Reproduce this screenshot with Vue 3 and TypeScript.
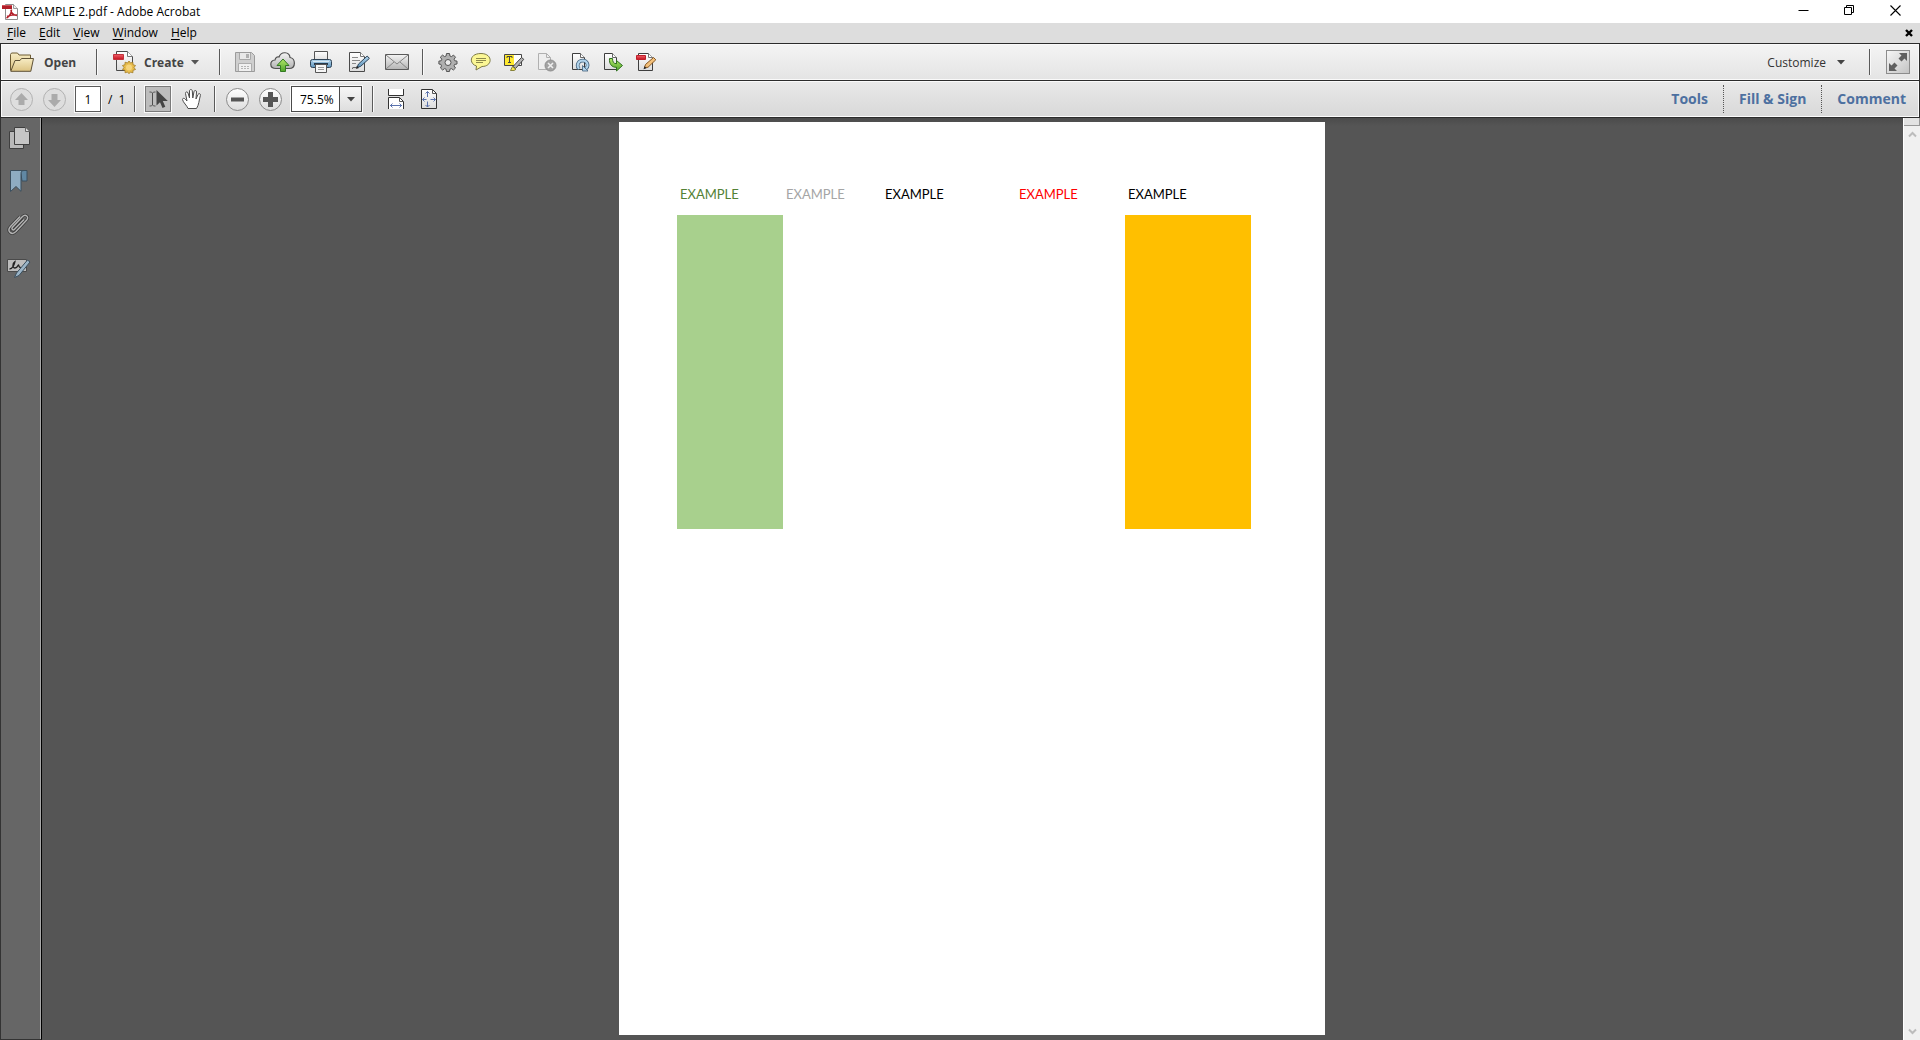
<script setup lang="ts">
import { ref } from 'vue'

const pageNumber = ref('1')
const zoomLevel = ref('75.5%')
const zoomLevels: string[] = ['50%', '75.5%', '100%', '125%', '200%']

const menus: { key: string; rest: string }[] = [
  { key: 'F', rest: 'ile' },
  { key: 'E', rest: 'dit' },
  { key: 'V', rest: 'iew' },
  { key: 'W', rest: 'indow' },
  { key: 'H', rest: 'elp' },
]

const panes: string[] = ['Tools', 'Fill & Sign', 'Comment']

const columns: { tone: string; text: string }[] = [
  { tone: 'green', text: 'EXAMPLE' },
  { tone: 'gray', text: 'EXAMPLE' },
  { tone: 'black', text: 'EXAMPLE' },
  { tone: 'red', text: 'EXAMPLE' },
  { tone: 'gold', text: 'EXAMPLE' },
]
</script>

<template>
  <div class="app">
    <svg class="defs" width="0" height="0" aria-hidden="true">
      <defs>
        <linearGradient id="paper" x1="0" y1="0" x2="0" y2="1">
          <stop offset="0" stop-color="#fff" />
          <stop offset="1" stop-color="#dcdcdc" />
        </linearGradient>
        <linearGradient id="metal" x1="0" y1="0" x2="0" y2="1">
          <stop offset="0" stop-color="#f4f4f4" />
          <stop offset="1" stop-color="#b4b4b4" />
        </linearGradient>
        <linearGradient id="folder" x1="0" y1="0" x2="0" y2="1">
          <stop offset="0" stop-color="#f7ecc4" />
          <stop offset="1" stop-color="#dcc382" />
        </linearGradient>
        <linearGradient id="redbar" x1="0" y1="0" x2="0" y2="1">
          <stop offset="0" stop-color="#f0606a" />
          <stop offset="1" stop-color="#c4121e" />
        </linearGradient>
        <linearGradient id="green" x1="0" y1="0" x2="0" y2="1">
          <stop offset="0" stop-color="#b4e86a" />
          <stop offset="1" stop-color="#4fa52a" />
        </linearGradient>
        <linearGradient id="blue" x1="0" y1="0" x2="0" y2="1">
          <stop offset="0" stop-color="#b5d6ec" />
          <stop offset="1" stop-color="#5c92bb" />
        </linearGradient>
      </defs>
    </svg>

    <header class="titlebar">
      <svg class="logo" width="16" height="16" viewBox="0 0 16 16" aria-hidden="true">
        <path d="M3.500.5h8l4 4v11h-12z" fill="#fff" stroke="#8d8d8d" />
        <path d="M11.500.5v4h4" fill="#eee" stroke="#9a9a9a" />
        <path d="M0 1h10v4H0z" fill="#b01e28" />
        <path d="M0 1h10v1H0z" fill="#d0535b" />
        <path d="M4.500 14.200c3-2 5-5 5-8.700M9 6c0 3 3 5 6 5.500M5 12.500c3-1.500 6-2.300 10-1.500" fill="none" stroke="#b3202a" stroke-width="1.500" />
      </svg>
      <h1 class="title">EXAMPLE 2.pdf - Adobe Acrobat</h1>
      <div class="caption">
        <button type="button" aria-label="Minimize">
          <svg width="11" height="11" viewBox="0 0 11 11"><path d="M.5 5.500h10" stroke="#000" /></svg>
        </button>
        <button type="button" aria-label="Restore">
          <svg width="11" height="11" viewBox="0 0 11 11"><path d="M.5 2.500h7v7h-7zM2.500 2.500v-2h7v7h-2" fill="none" stroke="#000" /></svg>
        </button>
        <button type="button" aria-label="Close">
          <svg width="11" height="11" viewBox="0 0 11 11"><path d="M.5.5l10 10M10.500.5l-10 10" stroke="#000" stroke-width="1.100" /></svg>
        </button>
      </div>
    </header>

    <nav class="menubar">
      <button v-for="menu in menus" :key="menu.key" type="button"><u>{{ menu.key }}</u>{{ menu.rest }}</button>
      <button class="closedoc" type="button" aria-label="Close document">
        <svg width="8" height="8" viewBox="0 0 8 8"><path d="M1 1l6 6M7 1l-6 6" stroke="#000" stroke-width="2.400" /></svg>
      </button>
    </nav>

    <div class="toolbar files">
      <button class="open" type="button">
        <svg width="26" height="22" viewBox="0 0 26 22">
          <path d="M1.500 19.500v-16l1-1.500h6l1.500 2h11.500v4" fill="url(#folder)" stroke="#6e5c33" />
          <path d="M1.800 20.300L6 9.500h5l1.500-2h12l-2.700 12.800z" fill="url(#folder)" stroke="#5e5136" stroke-linejoin="round" />
        </svg>
        <span>Open</span>
      </button>
      <i class="sep"></i>
      <button class="create" type="button">
        <svg width="24" height="24" viewBox="0 0 24 24">
          <path d="M3.500 1.500h11l5 5v14h-16z" fill="url(#paper)" stroke="#4a4a4a" />
          <path d="M14.500 1.500v5h5" fill="#fff" stroke="#777" />
          <path d="M.5 4.500h10v5H.5z" fill="url(#redbar)" stroke="#c2333c" />
          <path d="M16 11l1.500 2 2.400-.8.100 2.500 2.500.8-1.500 2 1.500 2-2.500.8-.1 2.500-2.400-.8-1.500 1.700-1.500-1.700-2.400.8-.1-2.500-2.500-.8 1.500-2-1.500-2 2.500-.8.100-2.500 2.400.8z" fill="#e8bd4d" stroke="#a17a22" stroke-width=".8" />
          <circle cx="16" cy="17.500" r="3" fill="#f5d47c" />
        </svg>
        <span>Create</span>
        <svg class="caret" width="8" height="5" viewBox="0 0 8 5"><path d="M0 0h8L4 4.500z" fill="#555" /></svg>
      </button>
      <i class="sep"></i>
      <div class="group wide">
        <button type="button" aria-label="Save" disabled>
          <svg width="22" height="22" viewBox="0 0 22 22">
            <path d="M1.500 1.500h16l3 3v16h-19z" fill="#cfcfcf" stroke="#9b9b9b" />
            <path d="M5.500 2v6.500h11V2" fill="#e9e9e9" stroke="#a8a8a8" />
            <path d="M12 3h3v4h-3z" fill="#b0b0b0" />
            <path d="M4.500 20v-7.500h13V20" fill="#f0f0f0" stroke="#adadad" />
            <path d="M7 15.500h8M7 17.500h8" stroke="#b5b5b5" stroke-dasharray="2 1" />
          </svg>
        </button>
        <button type="button" aria-label="Upload to cloud">
          <svg width="26" height="22" viewBox="0 0 26 22">
            <path d="M6 17.500c-7 0-6.500-8-1-8.500C5.500 6 7.500 5.500 9 6c2-6 10.500-5.500 11 .5 5.500.5 6.500 11-1 11z" fill="url(#metal)" stroke="#4f4f4f" stroke-width="1.200" />
            <path d="M13 8l6 6.500h-3.500v6h-5v-6H7z" fill="url(#green)" stroke="#337b22" stroke-linejoin="round" />
          </svg>
        </button>
        <button type="button" aria-label="Print">
          <svg width="24" height="24" viewBox="0 0 24 24">
            <path d="M5.500 1.500h13v9h-13z" fill="url(#paper)" stroke="#555" />
            <rect x="1.500" y="9.500" width="21" height="8" rx="2" fill="url(#blue)" stroke="#2f4355" />
            <path d="M4 11.500h16" stroke="#d8e8f3" />
            <path d="M5 14h14" stroke="#26384a" stroke-width="2" />
            <path d="M6.500 14.500h11v8h-11z" fill="#f6f6f6" stroke="#555" />
            <path d="M9 17.500h6M9 19.500h6" stroke="#999" />
          </svg>
        </button>
        <button type="button" aria-label="Edit">
          <svg width="22" height="22" viewBox="0 0 22 22">
            <path d="M1.500 1.500h11l4 4v15h-15z" fill="url(#paper)" stroke="#4a4a4a" />
            <path d="M12.500 1.500v4h4" fill="#fff" stroke="#777" />
            <path d="M4 6.500h6M4 9.500h8M4 12.500h4" stroke="#8a8a8a" />
            <path d="M4 17.500c2-2 3 0 5-1.500" stroke="#333" fill="none" />
            <path d="M9 16.500l1.500-3.500 8.700-8 2.200 2.400-8.800 8z" fill="url(#blue)" stroke="#2e4458" stroke-linejoin="round" />
            <path d="M8 18l3-1-2-2z" fill="#222" />
          </svg>
        </button>
        <button type="button" aria-label="Email">
          <svg width="26" height="20" viewBox="0 0 26 20">
            <path d="M1.500 2.500h23v15h-23z" fill="url(#metal)" stroke="#5a5a5a" />
            <path d="M2 3l11 9 11-9M2 17l8-7M24 17l-8-7" fill="none" stroke="#858585" />
          </svg>
        </button>
      </div>
      <i class="sep"></i>
      <div class="group">
        <button type="button" aria-label="Settings">
          <svg width="20" height="20" viewBox="0 0 20 20">
            <path d="M8.500 1.500h3l.4 2.500 1.500.6 2.100-1.500 2 2.100-1.400 2 .7 1.600 2.200.3v2.900l-2.400.4-.6 1.500 1.500 2.100-2.100 2-2-1.400-1.500.6-.4 2.300h-3l-.4-2.300-1.500-.6-2 1.400-2.100-2L3.500 13.900l-.6-1.500L.9 12V9.100l2.200-.3.7-1.600-1.500-2L4.500 3.100l2.100 1.500L8.100 4z" fill="#b0b0b0" stroke="#555" />
            <circle cx="10" cy="10.500" r="3" fill="#ececec" stroke="#555" />
          </svg>
        </button>
        <button type="button" aria-label="Add note">
          <svg width="22" height="20" viewBox="0 0 22 20">
            <path d="M11 1.500c12 0 12 13 1 13L6 18l.5-4C-1 12-1 1.500 11 1.500z" fill="#fbf795" stroke="#7d7a45" />
            <path d="M6 6.500h10M6 8.500h10M6 10.500h7" stroke="#8d8a4c" />
          </svg>
        </button>
        <button type="button" aria-label="Highlight text">
          <svg width="22" height="20" viewBox="0 0 22 20">
            <path d="M1.500 2.500h17v11h-17z" fill="#fff" stroke="#444" />
            <path d="M2 3h9v10H2z" fill="#ffe92e" />
            <path d="M4 6V4.500h5V6M6.500 4.500v6M5 10.500h3" fill="none" stroke="#444" />
            <path d="M10 14.500l8.500-9 2.300 1.800-8.300 9.200z" fill="#b4b4b4" stroke="#444" stroke-linejoin="round" />
            <path d="M7.500 18.500l2-4 3.500 2.800-2 1.200z" fill="#f5e750" stroke="#6d6820" stroke-width=".8" />
          </svg>
        </button>
        <button type="button" aria-label="Delete pages" disabled>
          <svg width="20" height="20" viewBox="0 0 20 20">
            <path d="M1.500 1.500h8l4 4v12h-12z" fill="#eee" stroke="#b0b0b0" />
            <path d="M9.500 1.500v4h4" fill="none" stroke="#b0b0b0" />
            <circle cx="13.500" cy="13.500" r="5.500" fill="#a2a2a2" stroke="#8f8f8f" />
            <path d="M11 11l5 5M16 11l-5 5" stroke="#eee" stroke-width="1.600" />
          </svg>
        </button>
        <button type="button" aria-label="Rotate pages">
          <svg width="20" height="20" viewBox="0 0 20 20">
            <path d="M2.500 1.500h8l4 4v12h-12z" fill="url(#paper)" stroke="#3e3e3e" />
            <path d="M10.500 1.500v4h4" fill="#fff" stroke="#666" />
            <path d="M9 17c-3-4-.5-8.500 4-8.500 4.500.2 6 5.500 3 8" fill="none" stroke="#41617c" stroke-width="3.600" />
            <path d="M9 17c-3-4-.5-8.500 4-8.500 4.500.2 6 5.500 3 8" fill="none" stroke="#b3d5ec" stroke-width="2" />
            <path d="M12.500 13.500v5.500h5.500z" fill="#b3d5ec" stroke="#41617c" stroke-width=".8" />
          </svg>
        </button>
        <button type="button" aria-label="Extract pages">
          <svg width="20" height="20" viewBox="0 0 20 20">
            <path d="M1.500 1.500h8l4 4v12h-12z" fill="url(#paper)" stroke="#3e3e3e" />
            <path d="M9.500 1.500v4h4" fill="#fff" stroke="#666" />
            <path d="M6.500 6.500c-.5 5 2 9 7 8.800v3.700l6-5.500-6-5v3.200c-3 0-4-2-4-5.200z" fill="url(#green)" stroke="#2f7020" stroke-linejoin="round" />
          </svg>
        </button>
        <button type="button" aria-label="Edit PDF">
          <svg width="22" height="20" viewBox="0 0 22 20">
            <path d="M3.500 1.500h10l4 4v13h-14z" fill="url(#paper)" stroke="#3e3e3e" />
            <path d="M13.500 1.500v4h4" fill="#fff" stroke="#777" />
            <path d="M1.500 3.500h9v4h-9z" fill="url(#redbar)" stroke="#bf1f2a" />
            <path d="M9.500 15.500l1-3 8-7 2.300 2.300-7.800 7.500z" fill="#f3c07a" stroke="#85551f" stroke-linejoin="round" />
            <path d="M8.500 17.300l1-3 2 2z" fill="#222" />
          </svg>
        </button>
      </div>
      <button class="customize" type="button">
        <span>Customize</span>
        <svg width="8" height="5" viewBox="0 0 8 5"><path d="M0 0h8L4 4.500z" fill="#444" /></svg>
      </button>
      <i class="sep"></i>
      <button class="fullscreen" type="button" aria-label="Read mode">
        <svg width="20" height="20" viewBox="0 0 20 20">
          <path d="M11 1h8v8l-2.500-2.500-3 3-3-3 3-3zM9 19H1v-8l2.500 2.500 3-3 3 3-3 3z" fill="#606060" />
        </svg>
      </button>
    </div>

    <div class="toolbar view">
      <div class="group first">
        <button type="button" aria-label="Previous page" disabled>
          <svg width="25" height="25" viewBox="0 0 25 25">
            <circle cx="12.500" cy="12.500" r="11" fill="#dedede" stroke="#b2b2b2" />
            <path d="M12.500 6l6.500 7h-3.500v5h-6v-5H6z" fill="#ababab" />
          </svg>
        </button>
        <button type="button" aria-label="Next page" disabled>
          <svg width="25" height="25" viewBox="0 0 25 25">
            <circle cx="12.500" cy="12.500" r="11" fill="#dedede" stroke="#b2b2b2" />
            <path d="M12.500 20L6 13h3.500V7h6v6H19z" fill="#ababab" />
          </svg>
        </button>
      </div>
      <input v-model="pageNumber" class="page-input" type="text" aria-label="Page number" />
      <span class="count"><span>/</span><span>1</span></span>
      <i class="sep"></i>
      <div class="group">
        <button class="pressed" type="button" aria-label="Select">
          <svg width="22" height="22" viewBox="0 0 22 22">
            <path d="M2.500 4c2 0 2.500.5 3 1 .5-.5 1-1 3-1M5.500 5v12M2.500 18c2 0 2.500-.5 3-1 .5.500 1 1 3 1" fill="none" stroke="#4d4d4d" />
            <path d="M9.500 2v15.500l3.500-3.300 2.500 5.800 2.800-1.300-2.500-5.700h5z" fill="#454545" />
          </svg>
        </button>
        <button type="button" aria-label="Hand">
          <svg width="22" height="22" viewBox="0 0 22 22">
            <path d="M7 20.500c-1-3-5-6-5.500-9 0-1.500 2-1.500 2.700-.3L6 13 4.500 5.500c-.3-1.800 2-2.200 2.500-.5l1.500 5V3c0-2 2.700-2 2.800 0l.5 7L13 3.700c.3-1.800 2.700-1.500 2.500.3L15 11l2-4.500c.8-1.600 3-.8 2.400.9C18 12 18 17 15.500 20.500z" fill="#fff" stroke="#4d4d4d" stroke-linejoin="round" />
          </svg>
        </button>
      </div>
      <i class="sep"></i>
      <div class="group tight">
        <button type="button" aria-label="Zoom out">
          <svg width="25" height="25" viewBox="0 0 25 25">
            <circle cx="12.500" cy="12.500" r="11" fill="url(#paper)" stroke="#8a8a8a" />
            <path d="M6 10.500h13v4H6z" fill="#555" />
          </svg>
        </button>
        <button type="button" aria-label="Zoom in">
          <svg width="25" height="25" viewBox="0 0 25 25">
            <circle cx="12.500" cy="12.500" r="11" fill="url(#paper)" stroke="#8a8a8a" />
            <path d="M10 5h5v5h5v5h-5v5h-5v-5H5v-5h5z" fill="#555" />
          </svg>
        </button>
      </div>
      <div class="zoom">
        <select v-model="zoomLevel" aria-label="Zoom level">
          <option v-for="level in zoomLevels" :key="level">{{ level }}</option>
        </select>
        <span class="zoom-arrow">
          <svg width="8" height="5" viewBox="0 0 8 5"><path d="M0 0h8L4 4.500z" fill="#444" /></svg>
        </span>
      </div>
      <i class="sep"></i>
      <div class="group">
        <button type="button" aria-label="Fit width">
          <svg width="18" height="20" viewBox="0 0 18 20">
            <path d="M1.500 0v6.500h15V0" fill="#fff" stroke="#333" />
            <path d="M1.500 20V8.500h11l4 4V20" fill="#fff" stroke="#333" />
            <path d="M12.500 8.500v4h4" fill="none" stroke="#555" />
            <path d="M3 16.500h12M5.500 14.500l-2 2 2 2M12.500 14.500l2 2-2 2" fill="none" stroke="#5a72ad" />
          </svg>
        </button>
        <button type="button" aria-label="Fit page">
          <svg width="18" height="20" viewBox="0 0 18 20">
            <path d="M1.500.5h11l4 4v15h-15z" fill="url(#paper)" stroke="#333" />
            <path d="M12.500.5v4h4" fill="none" stroke="#555" />
            <path d="M7.500 2.500v5.500M7.500 12.500V18M2.500 10.500h4M10.500 10.500h5M5.500 4.500l2-2 2 2M5.500 16l2 2 2-2M4.500 8.500l-2 2 2 2M13.500 8.500l2 2-2 2" fill="none" stroke="#5a72ad" />
          </svg>
        </button>
      </div>
      <div class="panes">
        <button v-for="pane in panes" :key="pane" type="button">{{ pane }}</button>
      </div>
    </div>

    <main class="workspace">
      <aside class="sidebar">
        <button type="button" aria-label="Page thumbnails">
          <svg width="24" height="24" viewBox="0 0 24 24">
            <path d="M2.500 5.500h14v17h-14z" fill="#b9b9b9" stroke="#3f3f3f" />
            <path d="M7.500 1.500h11l4 4v13h-15z" fill="#c6c6c6" stroke="#3f3f3f" />
            <path d="M18.500 1.500v4h4" fill="#ddd" stroke="#666" />
          </svg>
        </button>
        <button type="button" aria-label="Bookmarks">
          <svg width="24" height="24" viewBox="0 0 24 24">
            <path d="M13.500 1.500h6.500v10.500h-5z" fill="#6188a4" stroke="#3b4f5e" />
            <path d="M3.500 1.500H17c-2 0-3 1-3 3v17.800L9 17.500l-5.500 5z" fill="#8eacc2" stroke="#3b4f5e" />
          </svg>
        </button>
        <button type="button" aria-label="Attachments">
          <svg width="24" height="24" viewBox="0 0 24 24">
            <path d="M17 7.500l-9.500 9.800c-1.500 1.500-3.500-.3-2-2L15.500 4.500c3-3 7 .3 4.200 3.500L9 19.500c-4.500 4.500-9.500-.5-5.500-5L13 4.500" fill="none" stroke="#3c3c3c" stroke-width="3" />
            <path d="M17 7.500l-9.500 9.800c-1.500 1.500-3.500-.3-2-2L15.500 4.500c3-3 7 .3 4.200 3.500L9 19.500c-4.500 4.500-9.500-.5-5.500-5L13 4.500" fill="none" stroke="#b4b4b4" stroke-width="1.400" />
          </svg>
        </button>
        <button type="button" aria-label="Signatures">
          <svg width="24" height="24" viewBox="0 -2 24 24">
            <path d="M.5 2.500h19v12H.5z" fill="#bdbdbd" stroke="#4a4a4a" />
            <path d="M2.500 12c3 0 5-4.500 5.500-7.500-3 2-2.500 6.500 0 6.500s3-3 3.500-3 0 3 2.500 2.500" fill="none" stroke="#222" stroke-width="1.300" />
            <path d="M7.500 20.500l2-4.500L20.500 3l2.500 2-11 13.500z" fill="#9ab4c7" stroke="#3b4f5e" stroke-linejoin="round" />
          </svg>
        </button>
      </aside>

      <section class="document">
        <article class="page">
          <table>
            <thead>
              <tr>
                <th v-for="col in columns" :key="col.tone" :class="col.tone" scope="col">{{ col.text }}</th>
              </tr>
            </thead>
            <tbody>
              <tr>
                <td v-for="col in columns" :key="col.tone" :class="col.tone"></td>
              </tr>
            </tbody>
          </table>
        </article>
      </section>

      <div class="scrollbar">
        <i class="split"></i>
        <button type="button" aria-label="Scroll up">
          <svg width="9" height="7" viewBox="0 0 9 7"><path d="M1 5.500L4.500 2 8 5.500" fill="none" stroke="#bcbcbc" stroke-width="2" /></svg>
        </button>
        <button class="down" type="button" aria-label="Scroll down">
          <svg width="9" height="7" viewBox="0 0 9 7"><path d="M1 1.500L4.500 5 8 1.500" fill="none" stroke="#bcbcbc" stroke-width="2" /></svg>
        </button>
      </div>
    </main>
  </div>
</template>

<style>
body {
  background: #555;
}
</style>

<style scoped>
.app {
  display: flex;
  flex-direction: column;
  min-height: 100vh;
  font-family: "Open Sans", "Noto Sans", sans-serif;
  font-size: 12px;
  color: #000;
}

.app * {
  box-sizing: border-box;
}

.defs {
  position: absolute;
}

button {
  display: flex;
  align-items: center;
  justify-content: center;
  padding: 0;
  border: 0;
  background: none;
  font: inherit;
  color: inherit;
}

svg {
  display: block;
  flex: none;
}

.titlebar {
  display: flex;
  align-items: center;
  height: 23px;
  padding-left: 2px;
  background: #fff;
}

.title {
  margin: 0 0 0 5px;
  font-size: 12px;
  font-weight: 400;
  line-height: 20px;
}

.caption {
  display: flex;
  align-self: stretch;
  margin-left: auto;
  padding: 0 2px 2px 0;
}

.caption button {
  width: 46px;
}

.menubar {
  display: flex;
  align-items: center;
  gap: 13px;
  height: 20px;
  padding: 0 7px 1px;
  background: #ddd;
}

.menubar u {
  text-underline-offset: 2px;
}

.closedoc {
  margin-left: auto;
}

.toolbar {
  display: flex;
  align-items: center;
  border: 1px solid #2b2b2b;
  border-bottom: 0;
  box-shadow: inset 0 0 0 1px #fafafa;
}

.files {
  height: 37px;
  padding: 0 9px 0 8px;
  background: linear-gradient(#f4f4f4, #e4e4e4);
}

.view {
  height: 38px;
  padding: 0 13px 0 4px;
  border-bottom: 1px solid #2b2b2b;
  background: linear-gradient(#e9e9e9, #d8d8d8);
}

.sep {
  width: 2px;
  height: 26px;
  border-left: 1px solid #5a5a5a;
  border-right: 1px solid #fafafa;
}

.open,
.create {
  justify-content: flex-start;
  gap: 9px;
  font-weight: 700;
  color: #444;
}

.open {
  width: 87px;
}

.create {
  gap: 7px;
  width: 121px;
  padding-left: 15px;
}

.group {
  display: flex;
  margin: 0 7px;
}

.group button {
  width: 33px;
  height: 26px;
}

.group.wide {
  margin: 0 6px 0 5px;
}

.group.wide button {
  width: 38px;
}

.view .group {
  margin: 0 6px 0 5px;
}

.view .tight {
  margin-right: 4px;
}

.view .first {
  margin: 0 4px 0 0;
}

.customize {
  gap: 11px;
  margin: 0 24px 0 auto;
  color: #333;
}

.fullscreen {
  width: 24px;
  height: 24px;
  margin-left: 15px;
  border: 1px solid #8c8c8c;
  background: linear-gradient(135deg, #f6f6f6, #c4c4c4);
}

.page-input {
  width: 26px;
  height: 26px;
  padding: 0;
  border: 1px solid #5a5a5a;
  background: #fff;
  box-shadow: 0 0 0 1px #fafafa;
  font: inherit;
  text-align: center;
}

.count {
  display: flex;
  gap: 6px;
  width: 33px;
  padding-left: 7px;
}

.group .pressed {
  width: 26px;
  margin: 0 4px;
  border: 1px solid #7a7a7a;
  background: #bdbdbd;
  box-shadow: 0 0 0 1px #fafafa;
}

.zoom {
  display: flex;
  position: relative;
  width: 71px;
  height: 26px;
  margin-right: 10px;
}

.zoom select {
  width: 100%;
  padding: 0 24px 0 8px;
  border: 1px solid #4a4a4a;
  border-radius: 0;
  appearance: none;
  background: #fff;
  box-shadow: 0 0 0 1px #fafafa;
  font: inherit;
  color: #000;
}

.zoom-arrow {
  display: flex;
  position: absolute;
  inset: 1px 1px 1px auto;
  align-items: center;
  justify-content: center;
  width: 22px;
  border-left: 1px solid #4a4a4a;
  background: linear-gradient(#f6f6f6, #dedede);
  pointer-events: none;
}

.panes {
  display: flex;
  margin-left: auto;
}

.panes button {
  height: 28px;
  padding: 0 15px 1px;
  font-size: 14px;
  font-weight: 700;
  color: #4d70a0;
}

.panes button + button {
  border-left: 1px dotted #555;
}

.panes button:last-child {
  padding-right: 0;
}

.workspace {
  display: flex;
  flex: 1;
}

.sidebar {
  display: flex;
  flex-direction: column;
  gap: 19px;
  width: 42px;
  padding: 8px 0 0 6px;
  border-left: 1px solid #333;
  border-right: 1px solid #000;
  border-bottom: 1px solid #333;
  background: #666;
  box-shadow: inset -1px 0 0 #a8a8a8;
}

.sidebar button {
  width: 24px;
  height: 24px;
}

.document {
  display: flex;
  flex: 1;
  align-items: flex-start;
  justify-content: center;
  padding: 4px 1px 5px 0;
  background: linear-gradient(#4b4b4b, #555 8px);
}

.page {
  width: 706px;
  aspect-ratio: 706 / 913;
  padding: 63px 74px 0 58px;
  background: #fff;
}

.page table {
  width: 100%;
  border-collapse: collapse;
  table-layout: fixed;
}

.page th {
  height: 30px;
  padding: 0 0 12px 3px;
  font-family: Lato, sans-serif;
  font-size: 13px;
  font-weight: 400;
  line-height: 18px;
  text-align: left;
}

.page td {
  height: 314px;
  padding: 0;
}

th.green {
  width: 106px;
  color: #538135;
}

th.gray {
  width: 99px;
  color: #a5a5a5;
}

th.black {
  width: 134px;
}

th.red {
  width: 109px;
  color: #f00;
}

td.green {
  background: #a8d08d;
}

td.gold {
  background: #ffbf00;
}

.scrollbar {
  display: flex;
  flex-direction: column;
  width: 17px;
  border-left: 1px solid #fff;
  background: #f0f0f0;
}

.split {
  height: 8px;
  border-right: 1px solid #999;
  border-bottom: 1px solid #999;
  background: #e3e3e3;
}

.scrollbar button {
  height: 17px;
}

.scrollbar .down {
  margin-top: auto;
}
</style>
